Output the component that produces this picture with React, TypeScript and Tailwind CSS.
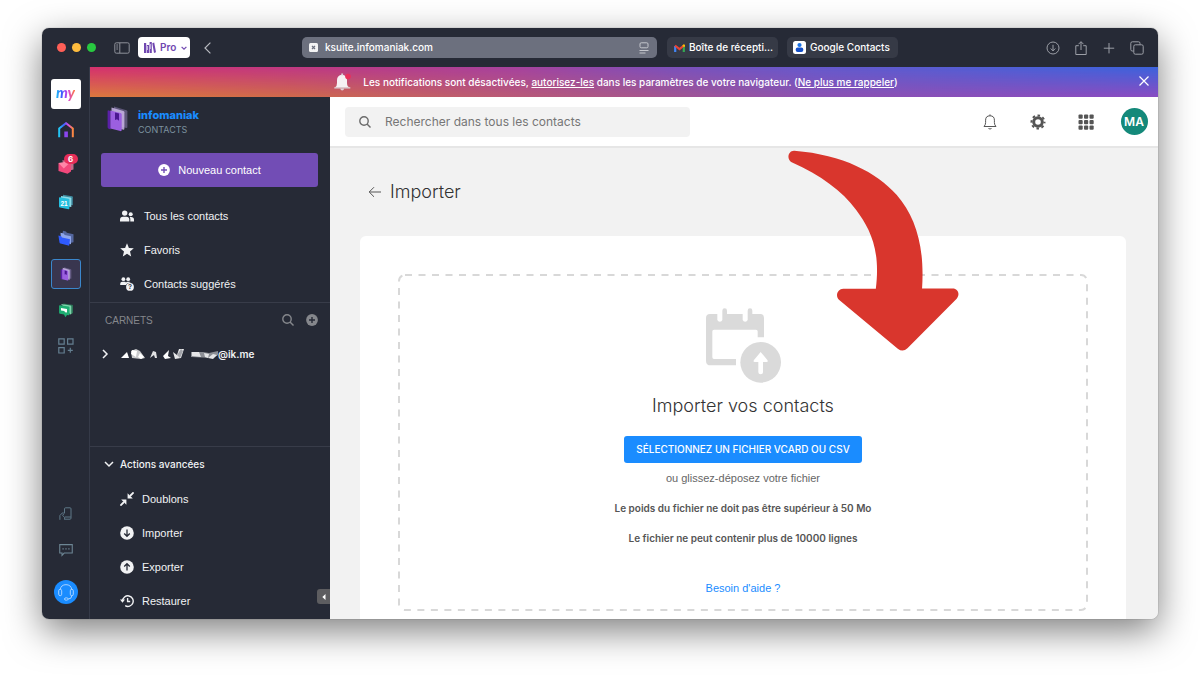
import type { ReactNode } from 'react';

type IconProps = { className?: string };

function IconBook({ className }: IconProps) {
  return (
    <svg viewBox="0 0 21 26" className={className} aria-hidden="true">
      <path d="M7 .6 19.4 4.2q1 .3 1 1.3V21q0 1.2-1.1 1L6.5 19Z" fill="#8a7bb0" opacity=".55" />
      <path d="M4.5 1.6 16.4 5q1 .3 1 1.3v16.5q0 1.2-1 1L4.5 20Z" fill="#c9b5e6" opacity=".85" />
      <path d="M.6 5.2q0-1 1-.8L3.6 5v18.5l-2-.8q-1-.4-1-1.4Z" fill="#5a20a8" />
      <path d="m3.4 4.4 10 2.6q1.3.3 1.3 1.6v15.5q0 1.3-1.3 1L3.4 22.6Z" fill="#9b5fe0" />
      <path d="m8 6.600 4 1v7.200l-2-1.500-2 .6Z" fill="#4b1791" />
    </svg>
  );
}

function IconHome() {
  return (
    <svg viewBox="0 0 16 16" className="h-4 w-4" fill="none" strokeWidth="2" aria-hidden="true">
      <defs>
        <linearGradient id="home" x1="0" x2="1" y1="0" y2="0">
          <stop offset="0" stopColor="#22c8f5" />
          <stop offset=".35" stopColor="#3a62ff" />
          <stop offset=".65" stopColor="#d44be8" />
          <stop offset="1" stopColor="#ff8a3d" />
        </linearGradient>
      </defs>
      <path d="M1.200 15.300V6.400L8 1.200l6.800 5.200v8.900" stroke="url(#home)" />
      <path d="M6.300 9.500h3.600v5.800H6.300z" fill="#8b46f0" />
    </svg>
  );
}

function IconMail() {
  return (
    <svg viewBox="0 0 16 16" className="h-4 w-4" aria-hidden="true">
      <path d="M4 2.500 15.500 1v10.500L10 13Z" fill="#c46a88" />
      <path d="M.5 5 7 8.500 13 3.500v10L9.500 15.700.5 13Z" fill="#f2487b" />
      <path d="m.5 5 5.300 5.500 7.200-7-2.500-.3Z" fill="#ff86a8" />
    </svg>
  );
}

function IconCalendar() {
  return (
    <svg viewBox="0 0 16 16" className="h-4 w-4" aria-hidden="true">
      <path d="m5 .8 9 1.400q.8.200.8 1v8L5 10Z" fill="#3f8ba0" />
      <path d="m3 2 9.500 1.500q.8.200.8 1v8.500L3 11.500Z" fill="#8ddbe8" />
      <path d="m1.800 3.300 8.700 1.400q.9.200.9 1v8.800q0 .8-.9.700L2 13.600q-1-.2-1-1V4q0-.8.800-.7Z" fill="#27bfdf" />
      <text x="2.500" y="12" fontSize="6.500" fontWeight="700" fill="#fff">
        21
      </text>
    </svg>
  );
}

function IconFolder() {
  return (
    <svg viewBox="0 0 16 16" className="h-4 w-4" aria-hidden="true">
      <path d="m5 .8 3 .8.800 1.200 6.700 1.500v8L12 13 4 6Z" fill="#54679f" />
      <path d="m2.500 2.800 3.200.8 1 1.300 6.300 1.400v8L3 11Z" fill="#8ea5ea" />
      <path d="m.4 5.600 2.800.6.800 1.200 8 1.800-.7 5.800q-.1.800-1 .6L2.500 13.600q-.8-.2-1-1Z" fill="#2f5bff" />
    </svg>
  );
}

function IconChat() {
  return (
    <svg viewBox="0 0 16 16" className="h-4 w-4" aria-hidden="true">
      <path d="m5 1.500 9 1.200q1 .1 1 1V11l-1.500 1Z" fill="#2c7557" />
      <path d="m3 2 9.500 1.600q.8.100.8 1V12l-1 .6Z" fill="#7fd6ac" />
      <path d="m2 3.200 8.600 1.400q.9.200.9 1v7q0 .8-.9.700L9 13l-1.600 2.300L6 12.500l-4-.7q-.9-.2-.9-1V4q0-.9.900-.8Z" fill="#1fae72" />
      <path d="m3 6 6 1v3.600L7 10.300 6.300 9 3 8.500Z" fill="#fff" />
    </svg>
  );
}

function IconApps() {
  return (
    <svg viewBox="0 0 16 16" className="h-4 w-4" fill="none" stroke="#647f91" strokeWidth="1.200" aria-hidden="true">
      <path d="M.8.8h5.400v5.400H.8zM9.600.8H15v5.400H9.600zM.8 9.600h5.400V15H.8zM12.300 9.800v5M9.800 12.300h5" />
    </svg>
  );
}

function IconPhoneSync() {
  return (
    <svg viewBox="0 0 14 14" className="h-3.5 w-3.5" fill="none" stroke="#5f7888" aria-hidden="true">
      <path d="M5.500 6V1.800q0-1 1-1H11q1 0 1 1v9.400q0 1-1 1H5.500M6 10h5.800M.9 12.800V8.500L3.300 6q1.200-.8 1.700.5L3.600 8.500l2 1.800v2.300" />
    </svg>
  );
}

function IconSpeech() {
  return (
    <svg viewBox="0 0 13 13" className="h-3.5 w-3.5" fill="none" stroke="#6d8695" aria-hidden="true">
      <path d="M.7 1.500h11.600v7.800H4.800L2.800 11.500V9.300H.7Z" />
      <path d="M3.200 5.400h1.200M5.900 5.400h1.200M8.600 5.400h1.200" strokeWidth="1.200" />
    </svg>
  );
}

function IconHeadset() {
  return (
    <svg viewBox="0 0 16 18" className="h-[18px] w-4" fill="none" stroke="#a8d2ff" aria-hidden="true">
      <path d="M2.200 6.500a5.900 5.900 0 0 1 11.600 0" />
      <rect x=".7" y="6.300" width="3" height="6.400" rx="1.500" />
      <rect x="12.300" y="6.300" width="3" height="6.400" rx="1.500" />
      <path d="M13.800 12.700q0 3.200-3.600 3.300" />
      <ellipse cx="8.300" cy="16" rx="1.900" ry="1.200" />
    </svg>
  );
}

function IconPeople() {
  return (
    <svg viewBox="0 0 14 12" className="h-3 w-3.5" fill="currentColor" aria-hidden="true">
      <circle cx="4.700" cy="3.100" r="2.700" />
      <path d="M0 11.500V9.600q0-2.900 3-2.900h3.300q3 0 3 2.900v1.900Z" />
      <circle cx="10.700" cy="4.300" r="2" />
      <path d="M10.300 11.500V9.300q0-1.300-.6-2.200H11q3 0 3 2.700v1.700Z" />
    </svg>
  );
}

function IconStar() {
  return (
    <svg viewBox="0 0 14 14" className="h-3.5 w-3.5" fill="currentColor" aria-hidden="true">
      <path d="m7 .2 1.900 4.700 4.900.4-3.800 3.200 1.200 5L7 10.800l-4.200 2.700 1.200-5L.2 5.300l4.900-.4Z" />
    </svg>
  );
}

function IconSuggested() {
  return (
    <svg viewBox="0 0 14 14" className="h-3.5 w-3.5" fill="currentColor" aria-hidden="true">
      <circle cx="3.400" cy="2.200" r="1.900" />
      <circle cx="8.200" cy="2.200" r="1.900" />
      <path d="M.2 8V6.800Q.2 4.800 2.300 4.800h2.300q1 0 1.400.6.500-.6 1.500-.6h1.700q1 0 1.500.7Q7 5.500 6 8Z" />
      <circle cx="10" cy="9.900" r="3.900" />
      <text x="10" y="12.300" textAnchor="middle" fontSize="6.500" fontWeight="700" fill="#262a36">
        ?
      </text>
    </svg>
  );
}

function IconMerge() {
  return (
    <svg viewBox="0 0 14 14" className="h-3.5 w-3.5" aria-hidden="true">
      <path d="M.4 13.600 4 10M13.600.4 10 4" stroke="currentColor" strokeWidth="1.800" />
      <path d="M1.200 7.600h5.200v5.200ZM12.800 6.400H7.600V1.200Z" fill="currentColor" />
    </svg>
  );
}

function IconCircleArrow({ up = false }: { up?: boolean }) {
  return (
    <svg viewBox="0 0 14 14" className="h-3.5 w-3.5" aria-hidden="true">
      <circle cx="7" cy="7" r="6.800" fill="currentColor" />
      <path
        d={up ? 'M7 10.500V4M4.200 6.500 7 3.700l2.800 2.800' : 'M7 3.500V10M4.200 7.500 7 10.300l2.800-2.800'}
        fill="none"
        stroke="#262a36"
        strokeWidth="1.300"
      />
    </svg>
  );
}

function IconRestore() {
  return (
    <svg viewBox="0 0 14 14" className="h-3.5 w-3.5" fill="none" stroke="currentColor" strokeWidth="1.400" aria-hidden="true">
      <path d="M2.600 7a5.300 5.300 0 1 1 2.600 4.700M7.600 4v3.500h2.600" />
      <path d="M0 5.500h5L2.500 8.700Z" fill="currentColor" stroke="none" />
    </svg>
  );
}

function IconPlusCircle({ className, cross }: { className: string; cross: string }) {
  return (
    <svg viewBox="0 0 12 12" className={className} aria-hidden="true">
      <circle cx="6" cy="6" r="5.900" fill="currentColor" />
      <path d="M6 3v6M3 6h6" stroke={cross} strokeWidth="1.400" />
    </svg>
  );
}

function IconSearch() {
  return (
    <svg viewBox="0 0 12 12" className="h-3 w-3" fill="none" stroke="currentColor" strokeWidth="1.400" aria-hidden="true">
      <circle cx="5" cy="5" r="4.200" />
      <path d="m8 8 3.500 3.500" />
    </svg>
  );
}

function IconChevron({ d, className }: { d: string; className: string }) {
  return (
    <svg viewBox="0 0 10 10" className={className} fill="none" stroke="currentColor" strokeWidth="1.500" aria-hidden="true">
      <path d={d} />
    </svg>
  );
}

function Toolbar() {
  return (
    <header className="flex h-[39px] shrink-0 items-center bg-[#262a36] font-[Inter,sans-serif] text-[10px] font-medium text-white">
      <div className="flex w-[260px] shrink-0 items-center">
        <div className="ml-[15px] flex gap-1.5">
          <span className="h-[9px] w-[9px] rounded-full bg-[#ff5f57]" />
          <span className="h-[9px] w-[9px] rounded-full bg-[#febc3e]" />
          <span className="h-[9px] w-[9px] rounded-full bg-[#28c840]" />
        </div>
        <button type="button" aria-label="Barre latérale" className="ml-[18px]">
          <svg viewBox="0 0 16 12" className="h-3 w-4" fill="none" stroke="#8f929b">
            <rect x=".8" y=".8" width="14.400" height="10.400" rx="1.500" />
            <path d="M5.800 1v10M2.300 3h1.800M2.300 5h1.800M2.300 7h1.800" />
          </svg>
        </button>
        <button type="button" className="ml-2 flex h-[21px] w-[52px] items-center rounded-[4px] bg-white pl-1.5 font-semibold text-[#7047b0]">
          <svg viewBox="0 0 12 11" className="mr-1 h-[11px] w-3" fill="currentColor" aria-hidden="true">
            <path d="M0 1h2.200v10H0zM2.800 3H5v8H2.800zM5.600 0h2.200v11H5.600zM8.300 1.200l1.900-.6L12 10.300l-2 .7Z" />
            <path d="M3.500 4v4M6.400 2v5" stroke="#fff" strokeWidth=".6" />
          </svg>
          Pro
          <IconChevron d="m2 3.500 3 3 3-3" className="ml-1 h-2 w-2" />
        </button>
        <button type="button" aria-label="Retour" className="ml-3 text-[#b5b7bd]">
          <IconChevron d="M7 .500 2.500 5 7 9.500" className="h-3 w-3 [stroke-width:1]" />
        </button>
      </div>
      <div className="flex h-[21px] max-w-[355px] flex-1 items-center rounded-[5px] bg-[#6c707e] pr-2 pl-[7px]">
        <svg viewBox="0 0 9 9" className="mr-[7px] h-[9px] w-[9px] shrink-0" aria-hidden="true">
          <rect width="9" height="9" rx="1.500" fill="#f3f3f4" />
          <path d="m3 3 3 3M6 3 3 6" stroke="#6c707e" strokeWidth="1.200" />
        </svg>
        <input aria-label="Adresse" defaultValue="ksuite.infomaniak.com" className="min-w-0 flex-1 bg-transparent outline-none" />
        <svg viewBox="0 0 10 12" className="h-3 w-2.5" fill="none" stroke="#c4c6cc" aria-hidden="true">
          <rect x="1" y=".8" width="8" height="5" rx="1.200" />
          <path d="M.5 8.500h9M.5 11h6" />
        </svg>
      </div>
      <a href="#mail" className="ml-2.5 flex h-[21px] w-[111px] items-center gap-1 rounded-[5px] bg-[#363a46] px-[7px] whitespace-nowrap">
        <svg viewBox="0 0 11 8" className="h-2 w-[11px] shrink-0" fill="none" aria-hidden="true">
          <path d="M1.200 8V2" stroke="#4285f4" strokeWidth="2.200" />
          <path d="M9.800 8V2" stroke="#34a853" strokeWidth="2.200" />
          <path d="M1 1.500 5.500 5 10 1.500" stroke="#ea4335" strokeWidth="2.200" />
          <path d="M8.700 2.600V1.200Q9.700-.4 11 1v1.800H8.700Z" fill="#fbbc04" />
        </svg>
        Boîte de récepti...
      </a>
      <a href="#google" className="ml-[9px] flex h-[21px] w-[111px] items-center gap-1 rounded-[5px] bg-[#363a46] px-1.5 whitespace-nowrap">
        <svg viewBox="0 0 13 13" className="h-[13px] w-[13px] shrink-0" aria-hidden="true">
          <rect width="13" height="13" rx="2.500" fill="#fff" />
          <circle cx="6.500" cy="4" r="2.100" fill="#1a73e8" />
          <rect x="2.700" y="6.500" width="7.600" height="4.500" rx="2" fill="#1550c8" />
        </svg>
        Google Contacts
      </a>
      <div className="mr-3.5 ml-auto flex items-center gap-3.5 [&_svg]:h-3.5 [&_svg]:w-3.5 [&_svg]:fill-none [&_svg]:stroke-[#9c9fa7]">
        <button type="button" aria-label="Téléchargements">
          <svg viewBox="0 0 14 14">
            <circle cx="7" cy="7" r="6" />
            <path d="M7 3.800v6M4.700 7.500 7 9.900l2.300-2.400" />
          </svg>
        </button>
        <button type="button" aria-label="Partager">
          <svg viewBox="0 0 14 14">
            <path d="M4.800 4.700H1.800v8.800h10.400V4.700h-3M7 9V.800M4.500 3.200 7 .7l2.500 2.500" />
          </svg>
        </button>
        <button type="button" aria-label="Nouvel onglet">
          <svg viewBox="0 0 14 14">
            <path d="M7 2v10.400M1.800 7.200h10.400" />
          </svg>
        </button>
        <button type="button" aria-label="Onglets">
          <svg viewBox="0 0 14 14">
            <rect x="3.800" y="3.800" width="9.400" height="9.400" rx="1.500" />
            <path d="M3.600 10H2.300Q.8 10 .8 8.500V2.300Q.8.800 2.300.800h6.200Q10 .8 10 2.300v1.300" />
          </svg>
        </button>
      </div>
    </header>
  );
}

function RailLink({ label, children }: { label: string; children: ReactNode }) {
  return (
    <a href="#app" aria-label={label} className="flex h-9 w-full items-center justify-center">
      {children}
    </a>
  );
}

function Rail() {
  return (
    <nav className="flex w-12 shrink-0 flex-col items-center border-r border-[#353a48] bg-[#262a36] pt-3 pb-[15px]">
      <a href="#my" className="mb-[3px] flex h-[30px] w-[30px] items-center justify-center rounded-[3px] bg-white">
        <span className="bg-[linear-gradient(to_right,#1fc3f5,#3a5cff_30%,#d040e8_60%,#ff7a3c)] bg-clip-text pb-1 font-[Lato,sans-serif] text-[15px] leading-4 font-black text-transparent italic">
          my
        </span>
      </a>
      <RailLink label="Accueil">
        <IconHome />
      </RailLink>
      <RailLink label="Mail">
        <span className="relative">
          <IconMail />
          <span className="absolute -top-1 left-1.5 flex h-2.5 w-3.5 items-center justify-center rounded-full bg-[#e62d58] font-[Inter,sans-serif] text-[8px] font-bold text-white">
            6
          </span>
        </span>
      </RailLink>
      <RailLink label="Calendrier">
        <IconCalendar />
      </RailLink>
      <RailLink label="kDrive">
        <IconFolder />
      </RailLink>
      <RailLink label="Contacts">
        <span className="flex h-[30px] w-[30px] items-center justify-center rounded-[3px] border border-[#3b87cc] bg-[#39364f]">
          <IconBook className="h-3.5 w-3" />
        </span>
      </RailLink>
      <RailLink label="kChat">
        <IconChat />
      </RailLink>
      <RailLink label="Applications">
        <IconApps />
      </RailLink>
      <div className="mt-auto w-full">
        <RailLink label="Synchroniser">
          <IconPhoneSync />
        </RailLink>
        <RailLink label="Commentaires">
          <IconSpeech />
        </RailLink>
      </div>
      <a href="#help" aria-label="Assistance" className="mt-3 flex h-6 w-6 items-center justify-center rounded-full bg-[#1a8cff]">
        <IconHeadset />
      </a>
    </nav>
  );
}

function Banner() {
  return (
    <div className="relative h-[30px] shrink-0 bg-[linear-gradient(to_right,#dc7a3e,#d0694c_19%,#b95a78_40%,#a8568c_52%,#8c52b2_68%,#8a4cc2)] font-[Inter,sans-serif] text-[10px] font-medium text-white">
      <div className="absolute inset-0 bg-[linear-gradient(to_right,#d4306e,#b93a88_24%,#a6429e_40%,#7c50ba_54%,#6659cc_68%,#3b63dc)] [mask-image:linear-gradient(to_bottom,black,transparent)]" />
      <div className="relative flex h-full items-center pr-2 pl-1">
        <p className="flex flex-1 items-center justify-center whitespace-nowrap">
          <svg viewBox="0 0 17 18" className="mr-3 h-[18px] w-[17px]" aria-hidden="true">
            <path d="M1 14.500q2-1 2-4.500V7q0-4.500 5-5.200 5 .7 5 5.200v3q0 3.500 2.500 4.500Z" fill="#f6f1f3" />
            <path d="M.3 14.300h16v1.200H.3zM6.300 15.800h3.800q-.3 1.700-1.900 1.700t-1.900-1.700ZM7.300.5h1.800v2H7.300z" fill="#dcd5d8" />
            <circle cx="14" cy="3.500" r="2.800" fill="#e8305c" />
          </svg>
          <span>
            Les notifications sont désactivées,{' '}
            <a href="#allow" className="underline">
              autorisez-les
            </a>{' '}
            dans les paramètres de votre navigateur. (
            <a href="#dismiss" className="underline">
              Ne plus me rappeler
            </a>
            )
          </span>
        </p>
        <button type="button" aria-label="Fermer">
          <svg viewBox="0 0 12 12" className="mb-0.5 h-3 w-3" stroke="#fff" strokeWidth="1.200">
            <path d="m1.500 1.500 9 9M10.500 1.500l-9 9" />
          </svg>
        </button>
      </div>
    </div>
  );
}

const MAIN_LINKS = [
  { label: 'Tous les contacts', icon: <IconPeople /> },
  { label: 'Favoris', icon: <IconStar /> },
  { label: 'Contacts suggérés', icon: <IconSuggested /> },
];

const ACTIONS = [
  { label: 'Doublons', icon: <IconMerge /> },
  { label: 'Importer', icon: <IconCircleArrow /> },
  { label: 'Exporter', icon: <IconCircleArrow up /> },
  { label: 'Restaurer', icon: <IconRestore /> },
];

function NavLink({ label, icon }: { label: string; icon: ReactNode }) {
  return (
    <li>
      <a href="#nav" className="flex h-[34px] items-center gap-[inherit] pl-[30px]">
        <span className="flex w-3.5 justify-center">{icon}</span>
        {label}
      </a>
    </li>
  );
}

function Sidebar() {
  return (
    <aside className="relative flex w-60 shrink-0 flex-col bg-[#262a36] text-[11px] text-[#f1f2f4]">
      <div className="flex items-start pt-[9px] pl-[17px]">
        <IconBook className="mr-2.5 h-[26px] w-[21px]" />
        <div className="font-[Inter,sans-serif]">
          <div className="text-[11px] leading-[18px] font-extrabold text-[#1a8cff]">infomaniak</div>
          <div className="text-[9px] leading-3 text-[#7c919f]">CONTACTS</div>
        </div>
      </div>
      <button type="button" className="mx-[11px] mt-[17px] mr-3 flex h-[34px] items-center justify-center gap-2 rounded-[3px] bg-[#724db5] text-white">
        <IconPlusCircle className="h-3 w-3" cross="#724db5" />
        Nouveau contact
      </button>
      <ul className="mt-3 pb-px [&_a]:gap-2.5">
        {MAIN_LINKS.map((l) => (
          <NavLink key={l.label} {...l} />
        ))}
      </ul>
      <div className="border-t border-[#383c49]">
        <div className="mt-2 flex h-[18px] items-center pr-3 pl-[15px] text-[#85878c]">
          <span className="mr-auto text-[10px]">CARNETS</span>
          <button type="button" aria-label="Rechercher un carnet" className="mr-3">
            <IconSearch />
          </button>
          <button type="button" aria-label="Ajouter un carnet">
            <IconPlusCircle className="h-3 w-3" cross="#262a36" />
          </button>
        </div>
        <a href="#book" className="mt-4 flex h-[18px] items-center pl-2.5 font-[Inter,sans-serif] text-[10px] font-semibold">
          <IconChevron d="m3 1 4 4-4 4" className="mr-2.5 h-[10px] w-[10px]" />
          <svg viewBox="0 0 98 12" className="h-3 w-[98px]" aria-hidden="true">
            <path d="m1 10 6-6 2 6Z" fill="#fff" />
            <path d="m11 3 5-2 4 2 5 7-4 1-9-1Z" fill="#c9cacd" />
            <path d="m12 2 5 1-1 6-5-3ZM20 5l4 4-3 2-3-2Z" fill="#fff" />
            <path d="m30 10 3-7 3 1 1 6-2 0-1-3Z" fill="#e1e2e4" />
            <path d="m43 8 6-6-1 6 3 2-6 1Z" fill="#fff" />
            <path d="m53 4 4 3 2-6 5 0-3 9-6 1Z" fill="#e6e7e9" />
            <path d="m57 7 4-6 2 2-3 7Z" fill="#a2a4aa" />
            <path d="m71 4 12 0 6 1 9-2v4l-5 3-22-1Z" fill="#8b8e95" />
            <path d="m72 4 7 0 2 5-9-1Zm12 1 5 1-1 4-3-1Zm9 1 4 1-4 4-5-1Z" fill="#e4e5e7" />
          </svg>
          @ik.me
        </a>
      </div>
      <div className="mt-auto border-t border-[#383c49] pb-px">
        <button type="button" className="mt-2 flex h-[18px] items-center pl-3.5 font-[Inter,sans-serif] text-[10px] font-medium">
          <IconChevron d="m1 3 4 4 4-4" className="mr-1.5 h-[10px] w-[10px]" />
          Actions avancées
        </button>
        <ul className="mt-[9px] [&_a]:gap-2">
          {ACTIONS.map((l) => (
            <NavLink key={l.label} {...l} />
          ))}
        </ul>
      </div>
      <button
        type="button"
        aria-label="Réduire le menu"
        className="absolute right-0 bottom-[15px] flex h-[15px] w-[13px] items-center justify-center rounded-l-[3px] bg-[#5d5d60]"
      >
        <svg viewBox="0 0 4 6" className="h-1.5 w-1" fill="#fff">
          <path d="M3.500 0v6L.3 3Z" />
        </svg>
      </button>
    </aside>
  );
}

function SearchHeader() {
  return (
    <div className="flex h-[51px] shrink-0 items-center border-b-2 border-[#e6e6e6] bg-white text-[#555]">
      <label className="ml-[15px] flex h-[30px] w-[345px] items-center rounded-[4px] bg-[#f2f2f2] px-3.5 text-[#6b6b6b]">
        <IconSearch />
        <input
          type="search"
          aria-label="Rechercher dans tous les contacts"
          placeholder="Rechercher dans tous les contacts"
          className="ml-3.5 min-w-0 flex-1 bg-transparent font-[Inter,sans-serif] text-[12px] outline-none placeholder:text-[#767676]"
        />
      </label>
      <div className="ml-auto flex [&>button]:flex [&>button]:w-12 [&>button]:items-center [&>button]:justify-center">
        <button type="button" aria-label="Notifications">
          <svg viewBox="0 0 14 16" className="h-4 w-3.5" fill="none" stroke="currentColor">
            <path d="M1 12.500q1.600-1.500 1.600-4V6.200Q2.600 1.800 7 1.800t4.400 4.400v2.300q0 2.500 1.600 4ZM7 .4v1.400M5.500 14.500q1.500 1 3 0" />
          </svg>
        </button>
        <button type="button" aria-label="Paramètres">
          <svg viewBox="0 0 16 16" className="h-4 w-4" fill="none" stroke="currentColor">
            <circle cx="8" cy="8" r="4.300" strokeWidth="3" />
            <circle cx="8" cy="8" r="6.500" strokeWidth="2" strokeDasharray="2.550 2.555" strokeDashoffset="1.275" />
          </svg>
        </button>
        <button type="button" aria-label="Applications">
          <svg viewBox="0 0 16 16" className="h-4 w-4" fill="currentColor">
            {[0, 5.500, 11].map((y) =>
              [0, 5.500, 11].map((x) => <rect key={`${x}-${y}`} x={x + 0.5} y={y + 0.5} width="4.200" height="4.200" rx="1" />),
            )}
          </svg>
        </button>
        <button type="button">
          <span className="flex h-[27px] w-[27px] items-center justify-center rounded-full bg-[#14897a] font-[Inter,sans-serif] text-[12px] font-semibold text-white">
            MA
          </span>
        </button>
      </div>
    </div>
  );
}

function IconImport() {
  return (
    <svg viewBox="0 0 225 225" className="h-[75px] w-[75px]" fill="#dadada" aria-hidden="true">
      <path
        fillRule="evenodd"
        d="M12 18h22v18a8 8 0 0 0 15 0V8a7 7 0 0 1 14 0v10h47v18a8 8 0 0 0 15 0V8a7 7 0 0 1 14 0v10h24q11 0 11 12v58h-19V70q0-5-5-5H24q-5 0-5 5v78q0 5 5 5h66v19H14q-14 0-14-14V30q0-12 12-12Z"
      />
      <circle cx="164" cy="163" r="61" />
      <path d="m164 132 20 24q4 6-3 6h-10v31q0 6-7 6t-7-6v-31h-10q-7 0-3-6Z" fill="#fff" />
    </svg>
  );
}

function ImportPage() {
  return (
    <div className="relative flex min-h-0 flex-1 flex-col overflow-hidden bg-[#f2f2f2] px-8 pl-[30px]">
      <h1 className="mt-[29px] flex items-center pl-2 font-[Inter,sans-serif] text-[18px] leading-[30px] font-light text-[#333]">
        <a href="#back" aria-label="Retour" className="mr-2">
          <svg viewBox="0 0 14 12" className="h-3 w-3.5" fill="none" stroke="#555">
            <path d="M13 6H1.200M6 1.200 1.200 6 6 10.800" />
          </svg>
        </a>
        Importer
      </h1>
      <section className="mt-[29px] shrink-0 rounded-t-[6px] bg-white p-[38px] pb-8">
        <div className="relative flex flex-col items-center px-4 pt-[34px] pb-3.5 text-center text-[11px] text-[#666]">
          <svg className="absolute inset-0 h-full w-full" fill="none" aria-hidden="true">
            <rect x="1" y="1" rx="6" stroke="#d8d8d8" strokeWidth="2" strokeDasharray="7 6.500" className="h-[calc(100%-2px)] w-[calc(100%-2px)]" />
          </svg>
          <IconImport />
          <h2 className="mt-2 font-[Inter,sans-serif] text-[18px] leading-[30px] font-light text-[#333]">Importer vos contacts</h2>
          <button type="button" className="relative mt-[15px] h-[27px] rounded-[3px] bg-[#1a8cff] px-3 font-[Inter,sans-serif] text-[10px] font-medium text-white">
            SÉLECTIONNEZ UN FICHIER VCARD OU CSV
          </button>
          <p className="mt-1.5 leading-[18px]">ou glissez-déposez votre fichier</p>
          <div className="mt-3 flex flex-col gap-3 font-[Inter,sans-serif] text-[10px] leading-[18px] font-semibold text-[#555]">
            <p>Le poids du fichier ne doit pas être supérieur à 50 Mo</p>
            <p>Le fichier ne peut contenir plus de 10000 lignes</p>
          </div>
          <a href="#help" className="relative mt-8 leading-[18px] text-[#1a8cff]">
            Besoin d'aide ?
          </a>
        </div>
      </section>
      <svg viewBox="20 26 520 608" className="pointer-events-none absolute top-px right-[198px] h-[203px] w-[173px]" fill="#d9362d" aria-hidden="true">
        <path d="M42 30C190 42 288 95 350 163 408 230 434 320 426 444H518C534 444 541 461 530 475L382 624Q368 637 353 625L177 479C163 466 173 445 189 445H287C302 325 268 262 228 208 186 152 122 104 34 65 17 55 24 29 42 30Z" />
      </svg>
    </div>
  );
}

export default function App() {
  return (
    <div className="flex h-screen bg-white px-[42px] pt-7 pb-14 font-['Liberation_Sans',Arial,sans-serif]">
      <div className="flex min-w-0 flex-1 flex-col overflow-hidden rounded-[7px] shadow-[0_0_1px_rgba(0,0,0,0.6),0_12px_36px_rgba(0,0,0,0.5)]">
        <Toolbar />
        <div className="flex min-h-0 flex-1">
          <Rail />
          <div className="flex min-w-0 flex-1 flex-col">
            <Banner />
            <div className="flex min-h-0 flex-1">
              <Sidebar />
              <main className="flex min-w-0 flex-1 flex-col">
                <SearchHeader />
                <ImportPage />
              </main>
            </div>
          </div>
        </div>
      </div>
    </div>
  );
}
